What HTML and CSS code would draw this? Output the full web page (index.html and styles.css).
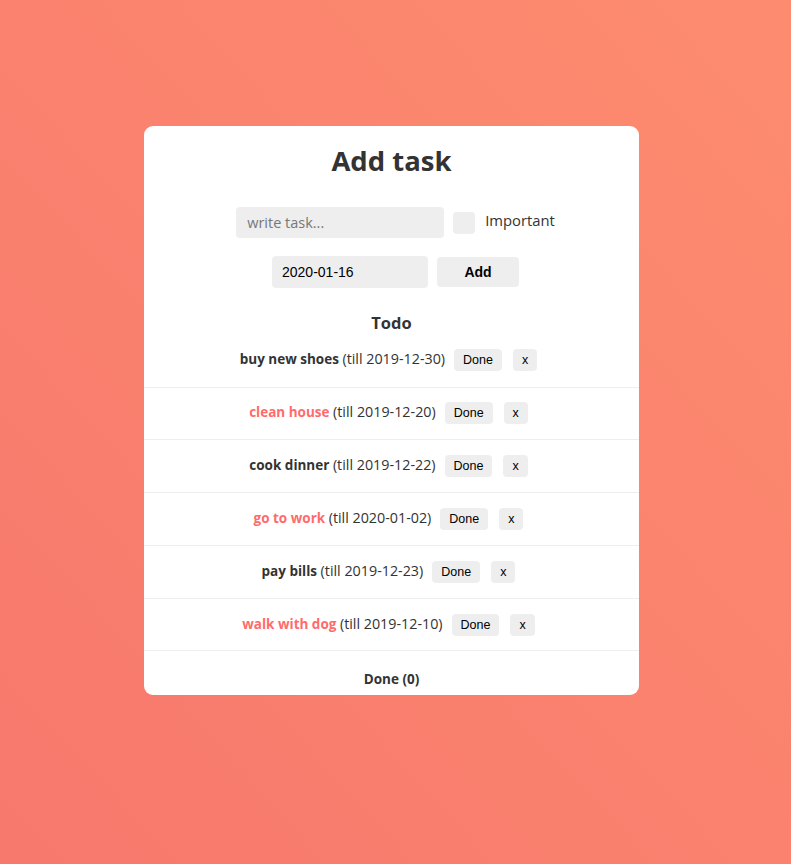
FILE: index.html
```html
<!DOCTYPE html>
<html lang="en">
<head>
<meta charset="utf-8">
<title>Todo</title>
<link rel="stylesheet" href="styles.css">
</head>
<body>
<div class="card">
  <h1 class="title">Add task</h1>
  <div class="form">
    <div class="form-row">
      <input class="task-input" type="text" placeholder="write task...">
      <span class="check"></span>
      <label class="important">Important</label>
    </div>
    <div class="form-row">
      <div class="date-input">2020-01-16</div>
      <button class="add-btn">Add</button>
    </div>
  </div>
  <h2 class="section">Todo</h2>
  <ul class="list">
    <li class="item"><p><strong>buy new shoes</strong> <span>(till 2019-12-30)</span></p><button class="btn">Done</button><button class="btn x">x</button></li>
    <li class="item"><p><strong class="hot">clean house</strong> <span>(till 2019-12-20)</span></p><button class="btn">Done</button><button class="btn x">x</button></li>
    <li class="item"><p><strong>cook dinner</strong> <span>(till 2019-12-22)</span></p><button class="btn">Done</button><button class="btn x">x</button></li>
    <li class="item"><p><strong class="hot">go to work</strong> <span>(till 2020-01-02)</span></p><button class="btn">Done</button><button class="btn x">x</button></li>
    <li class="item"><p><strong>pay bills</strong> <span>(till 2019-12-23)</span></p><button class="btn">Done</button><button class="btn x">x</button></li>
    <li class="item"><p><strong class="hot">walk with dog</strong> <span>(till 2019-12-10)</span></p><button class="btn">Done</button><button class="btn x">x</button></li>
  </ul>
  <h3 class="section done-title">Done (0)</h3>
</div>
</body>
</html>
```
FILE: styles.css
```css
* { box-sizing: border-box; }
html, body { height: 100%; }
body {
  margin: 0;
  padding-right: 8px;
  min-height: 864px;
  background: linear-gradient(to top right, #f7786d, #fd8c6f);
  font-family: "Open Sans", sans-serif;
  color: #333;
  display: flex;
  flex-direction: column;
  align-items: center;
}
.card {
  margin-top: 126px;
  width: 495px;
  height: 569px;
  background: #fff;
  border-radius: 9px;
  overflow: hidden;
  text-align: center;
}
.title {
  margin: 15px 0 0;
  font-size: 27.5px;
  line-height: 40px;
  font-weight: 700;
}
.form {
  margin-top: 26px;
  padding-left: 8px;
  display: flex;
  flex-direction: column;
  gap: 18px;
}
.form-row {
  display: flex;
  justify-content: center;
  align-items: center;
}
.task-input {
  width: 208px;
  height: 31px;
  border: none;
  background: #eee;
  border-radius: 4px;
  padding: 0 11px;
  font-family: "Open Sans", sans-serif;
  font-size: 14.5px;
  color: #333;
  outline: none;
}
.task-input::placeholder { color: #777; }
.check {
  width: 22px;
  height: 22px;
  background: #eee;
  border-radius: 4px;
  margin-left: 9px;
}
.important {
  margin-left: 10px;
  font-size: 14.8px;
  position: relative;
  top: -3px;
}
.date-input {
  width: 156px;
  height: 32px;
  background: #eee;
  border-radius: 4px;
  padding-left: 10px;
  display: flex;
  align-items: center;
  font-family: "Liberation Sans", Arial, sans-serif;
  font-size: 14px;
  color: #000;
  text-align: left;
}
.add-btn {
  margin-left: 9px;
  width: 82px;
  height: 30px;
  border: none;
  border-radius: 4px;
  background: #eee;
  font-family: "Liberation Sans", Arial, sans-serif;
  font-weight: 700;
  font-size: 14px;
  color: #000;
}
.section {
  margin: 24px 0 0;
  font-size: 16.5px;
  line-height: 22px;
  font-weight: 700;
}
.list {
  list-style: none;
  margin: 0;
  padding: 0;
}
.item {
  height: 52.8px;
  border-bottom: 1px solid #eee;
  display: flex;
  justify-content: center;
  align-items: center;
  padding-right: 6px;
}
.item:first-child { height: 53.5px; }
.item p {
  margin: 0 0 3px;
  font-size: 13.5px;
}
.item p span { font-size: 14.3px; }
.item strong { font-weight: 700; }
.item .hot { color: #ff6b6b; }
.btn {
  margin-left: 9px;
  height: 22px;
  padding: 0 9px;
  border: none;
  border-radius: 4px;
  background: #eee;
  font-family: "Liberation Sans", Arial, sans-serif;
  font-size: 12.5px;
  color: #000;
}
.btn.x { margin-left: 11px; padding: 0 9px; }
.done-title {
  margin-top: 17px;
  font-size: 13.5px;
}
```
